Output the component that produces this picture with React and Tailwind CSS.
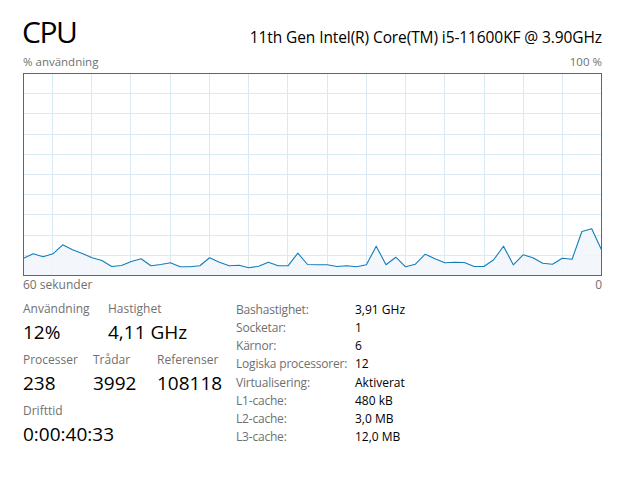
const heights = [
  17.3, 21.7, 18.7, 21.7, 30.7, 25.7, 22, 17.7, 15, 9,
  10, 14, 16.7, 9.7, 11, 12.7, 8.7, 8.7, 9.7, 17.7,
  13.3, 9.7, 10.3, 7.7, 9.3, 13.3, 9.7, 9.7, 22.3, 11,
  10.7, 10.7, 9, 9.7, 8.7, 10.7, 29.3, 10.7, 18.3, 8.7,
  11.3, 21.3, 16.7, 12.7, 13.3, 13, 9, 9, 15.7, 29.3,
  10.7, 20.7, 17.7, 12.3, 11.3, 17.3, 16.3, 44, 46.7, 25.7,
];

function CpuGraph() {
  const step = 578 / 59;
  const pts = heights.map((h, i) => `${(0.5 + i * step).toFixed(1)},${(202.5 - h).toFixed(1)}`).join(' ');
  const vLines = Array.from({ length: 14 }, (_, k) => Math.round(29 + k * 39.23) + 0.5);
  const hLines = Array.from({ length: 9 }, (_, k) => Math.round((k + 1) * 20.2) + 0.5);

  return (
    <svg width="579" height="203" viewBox="0 0 579 203" className="block">
      {vLines.map((x) => (
        <line key={'v' + x} x1={x} y1="0" x2={x} y2="203" stroke="#d9eaf4" strokeWidth="1" />
      ))}
      {hLines.map((y) => (
        <line key={'h' + y} x1="0" y1={y} x2="579" y2={y} stroke="#d9eaf4" strokeWidth="1" />
      ))}
      <polygon points={`0.5,202.5 ${pts} 578.5,202.5`} fill="#f1f6fa" fillOpacity="0.85" />
      <polyline points={pts} fill="none" stroke="#117dbb" strokeWidth="1.1" strokeLinejoin="round" />
      <rect x="0.5" y="0.5" width="578" height="202" fill="none" stroke="#117dbb" strokeWidth="1" />
    </svg>
  );
}

function Stat({ label, value, width }) {
  return (
    <div className={`flex flex-col gap-[3px] ${width}`}>
      <span className="text-[12px] leading-[16px] text-[#707070] whitespace-nowrap">{label}</span>
      <span className="text-[19px] leading-[24px] text-black whitespace-nowrap">{value}</span>
    </div>
  );
}

const specs = [
  ['Bashastighet:', '3,91 GHz'],
  ['Socketar:', '1'],
  ['Kärnor:', '6'],
  ['Logiska processorer:', '12'],
  ['Virtualisering:', 'Aktiverat'],
  ['L1-cache:', '480 kB'],
  ['L2-cache:', '3,0 MB'],
  ['L3-cache:', '12,0 MB'],
];

export default function App() {
  return (
    <div className="w-[625px] h-[483px] bg-white px-[23px] pt-[17px] font-['Open_Sans',sans-serif] text-black">
      <div className="flex items-baseline justify-between">
        <h1 className="text-[30px] leading-[30px] font-normal tracking-[-1.5px] -ml-px">CPU</h1>
        <span className="text-[15.5px] leading-[20px] tracking-[-0.1px]">11th Gen Intel(R) Core(TM) i5-11600KF @ 3.90GHz</span>
      </div>

      <div className="mt-[8px] flex justify-between text-[11.5px] leading-[14px] text-[#707070]">
        <span>% användning</span>
        <span>100 %</span>
      </div>

      <div className="mt-[4px]">
        <CpuGraph />
      </div>

      <div className="mt-[2px] flex justify-between text-[12px] leading-[14px] text-[#707070]">
        <span>60 sekunder</span>
        <span>0</span>
      </div>

      <div className="mt-[9px] flex">
        <div className="w-[213px] flex flex-col gap-[8px]">
          <div className="flex">
            <Stat label="Användning" value="12%" width="w-[85px]" />
            <Stat label="Hastighet" value="4,11 GHz" width="w-[100px]" />
          </div>
          <div className="flex">
            <Stat label="Processer" value="238" width="w-[70px]" />
            <Stat label="Trådar" value="3992" width="w-[64px]" />
            <Stat label="Referenser" value="108118" width="w-[70px]" />
          </div>
          <div className="flex">
            <Stat label="Drifttid" value="0:00:40:33" width="w-[120px]" />
          </div>
        </div>

        <div className="grid grid-cols-[119px_auto] text-[12px] leading-[18px]">
          {specs.map(([k, v]) => (
            <div key={k} className="contents">
              <span className="text-[#707070] whitespace-nowrap tracking-[-0.2px]">{k}</span>
              <span className="text-black whitespace-nowrap">{v}</span>
            </div>
          ))}
        </div>
      </div>
    </div>
  );
}
